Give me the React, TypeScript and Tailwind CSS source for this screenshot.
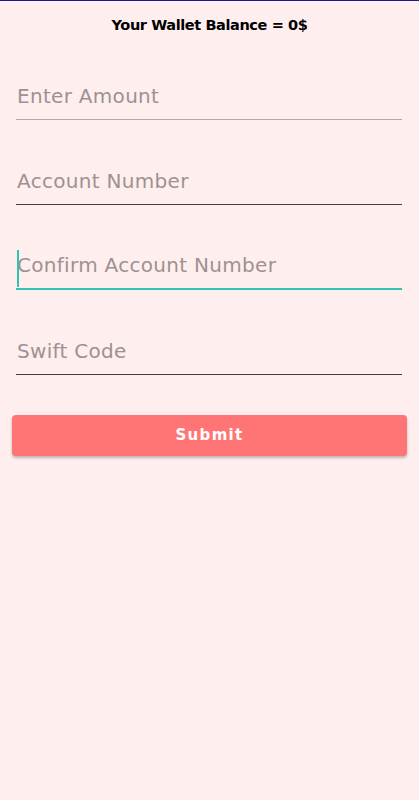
import React from 'react'

const fields = [
  { label: 'Enter Amount', line: 'border-b border-[#b3a7a7]' },
  { label: 'Account Number', line: 'border-b border-[#4a3c3c]' },
  { label: 'Confirm Account Number', line: 'border-b-2 border-[#2ec4b2]', focused: true },
  { label: 'Swift Code', line: 'border-b border-[#4a3c3c]' },
]

export default function App() {
  return (
    <div className="min-h-[800px] bg-[#ffeeee] border-t border-[#1a1a8c] font-['DejaVu_Sans',sans-serif]">
      <h1 className="pt-[14px] text-center text-[14.5px] leading-5 font-bold tracking-[-0.4px] text-black">
        Your Wallet Balance = 0$
      </h1>
      <div className="mt-[37px] flex flex-col gap-[37px] pl-4 pr-[17px]">
        {fields.map((f) => (
          <div key={f.label} className={`relative flex h-[48px] items-center ${f.line}`}>
            {f.focused && <span className="absolute left-[1px] top-[8px] h-[37px] w-[2px] bg-[#2ec4b2]" />}
            <span className="pl-[1px] text-[20px] tracking-[0.3px] text-[#9e9191]">{f.label}</span>
          </div>
        ))}
      </div>
      <div className="mt-[40px] px-3">
        <button className="h-[41px] w-full rounded-[4px] bg-[#ff7575] text-[15px] font-bold tracking-[1.3px] text-white shadow-[0_2px_3px_rgba(0,0,0,0.25)]">
          Submit
        </button>
      </div>
    </div>
  )
}
